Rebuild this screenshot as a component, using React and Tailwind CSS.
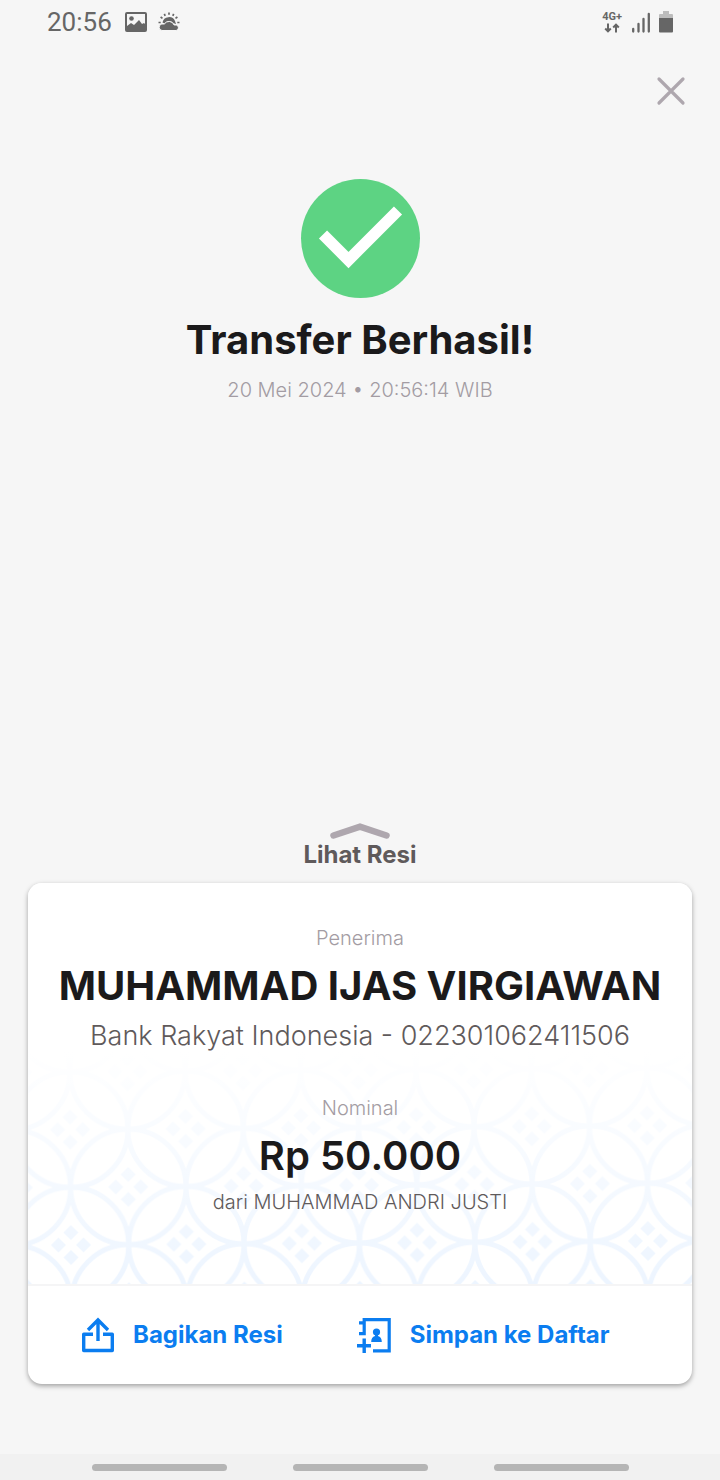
function StatusBar() {
  return (
    <header className="flex h-11 items-center justify-between pr-[47px] pl-[47px] font-[Roboto,sans-serif] text-[#666]">
      <div className="flex items-center">
        <span className="text-[26px] leading-8">20:56</span>
        <svg className="ml-[13px] h-5 w-[22px]" viewBox="0 0 22 20" fill="none">
          <rect x="1" y="1" width="20" height="18" rx="1" stroke="currentColor" strokeWidth="2" />
          <circle cx="6.5" cy="6.5" r="2.3" fill="currentColor" />
          <path d="M2 14l4-3 3 2 5-5 3 4 2-1 2 2v6H2z" fill="currentColor" />
        </svg>
        <svg className="ml-[11px] h-5 w-[22px]" viewBox="0 0 22 20" fill="none">
          <path d="M4.500 10.500a6.600 6.600 0 0 1 12.600-1.300l.9 3-3-1.500a5 5 0 0 0-6.500-.7l-2 1.500z" fill="currentColor" />
          <path
            d="M4 18.500a3.300 3.300 0 0 1-.2-6.500h2.500a5.500 5.500 0 0 1 9.800 1h2.200a2.800 2.800 0 0 1-.2 5.500z"
            fill="currentColor"
            stroke="#f6f6f6"
            strokeWidth="1"
          />
          <path
            d="M11 .5v2.300M6.300 1.800l.9 2M15.700 1.800l-.9 2M2.600 5l1.900 1.400M19.400 5l-1.900 1.400M.5 10.500h2.200M19.300 10.500h2.200"
            stroke="currentColor"
            strokeWidth="1.700"
          />
        </svg>
      </div>
      <div className="flex items-center">
        <div className="flex flex-col items-center">
          <span className="text-[11px] leading-3 font-bold">4G+</span>
          <svg className="h-[10px] w-4" viewBox="0 0 16 10" fill="none" stroke="currentColor" strokeWidth="2">
            <path d="M4 .5v8M1.200 5.500L4 8.300l2.800-2.800M12 9.500v-8M9.200 4.500L12 1.700l2.800 2.800" />
          </svg>
        </div>
        <svg className="ml-[10px] h-[21px] w-[18px]" viewBox="0 0 18 21" stroke="currentColor" strokeWidth="2.300" strokeLinecap="round">
          <path d="M1.200 17v2.500M6.500 12v7.500M11.500 7v12.500M16.800 2v17.500" />
        </svg>
        <svg className="ml-[9px] h-[22px] w-[14px]" viewBox="0 0 14 22">
          <path d="M4 0h6v3h3a1 1 0 0 1 1 1v4H0V4a1 1 0 0 1 1-1h3z" fill="#bdbdbd" />
          <path d="M0 7h14v13.500a1 1 0 0 1-1 1H1a1 1 0 0 1-1-1z" fill="currentColor" />
        </svg>
      </div>
    </header>
  )
}

// kawung batik, strongest at the bottom edge and fading out towards the text
function BatikPattern() {
  return (
    <svg className="absolute inset-0 h-full w-full" aria-hidden="true">
      <defs>
        <g id="flower">
          <circle r="57.7" fill="none" stroke="#edf5ff" strokeWidth="5" />
          <path
            d="M0-20l7.500 7.500L0-5l-7.500-7.500zM0 5l7.500 7.500L0 20l-7.500-7.500zM-12.500-7.500l7.500 7.500-7.500 7.500L-20 0zM12.500-7.500L20 0l-7.500 7.500L5 0z"
            fill="#edf5ff"
          />
        </g>
        <pattern
          id="kawung"
          width="115.4"
          height="115.4"
          patternUnits="userSpaceOnUse"
          patternTransform="translate(43 362) rotate(-0.4)"
        >
          <use href="#flower" />
          <use href="#flower" x="115.4" />
          <use href="#flower" y="115.4" />
          <use href="#flower" x="115.4" y="115.4" />
          <use href="#flower" x="57.7" y="57.7" />
        </pattern>
        <linearGradient id="fade" x1="0" y1="0" x2="0" y2="1">
          <stop offset="0.42" stopColor="#fff" />
          <stop offset="1" stopColor="#fff" stopOpacity="0" />
        </linearGradient>
      </defs>
      <rect width="100%" height="100%" fill="url(#kawung)" />
      <rect width="100%" height="100%" fill="url(#fade)" />
    </svg>
  )
}

function ShareIcon() {
  return (
    <svg className="h-9 w-8" viewBox="0 0 32 36" fill="none" stroke="currentColor" strokeWidth="3.400">
      <path d="M11 17.200H1.700v16.300h28.600V17.200H21" strokeLinejoin="round" />
      <path d="M16 24V3M6 13L16 3l10 10" />
    </svg>
  )
}

function ContactIcon() {
  return (
    <svg className="h-9 w-[34px]" viewBox="0 0 34 36" fill="none" stroke="currentColor" strokeWidth="3.200">
      <path d="M2 5.800h5.200M7.200 9V2.600h25v31.200H16M2 16.700h5.200V9" />
      <path d="M7.200 21.500V36M0 28.700h14" strokeWidth="3.400" />
      <circle cx="19.500" cy="15" r="3.600" fill="currentColor" stroke="none" />
      <path d="M18 16h3v3c2.500.8 3.800 2.600 3.800 6H14.200c0-3.400 1.300-5.200 3.800-6z" fill="currentColor" stroke="none" />
    </svg>
  )
}

export default function App() {
  return (
    <div className="flex min-h-screen flex-col bg-[#f6f6f6] font-[Inter,sans-serif] text-[#1b1a1b]">
      <StatusBar />

      <div className="flex justify-end px-[34px] pt-8">
        <button type="button" aria-label="Tutup" className="text-[#aea7ae]">
          <svg className="h-[30px] w-[30px]" viewBox="0 0 30 30" stroke="currentColor" strokeWidth="3.200" strokeLinecap="round">
            <path d="M3 3l24 24M27 3L3 27" />
          </svg>
        </button>
      </div>

      <main className="flex flex-1 flex-col">
        <div className="flex flex-col items-center pt-[73px] text-center">
          <svg className="h-[119px] w-[119px]" viewBox="0 0 119 119" fill="none">
            <circle cx="59.500" cy="59.500" r="59.500" fill="#5dd383" />
            <path d="M22 55.500L47.500 81 97 31.500" stroke="#fff" strokeWidth="11.500" />
          </svg>
          <h1 className="mt-[18px] text-[40px] leading-12 font-bold">Transfer Berhasil!</h1>
          <p className="mt-3 text-[20px] leading-7 font-light text-[#a39ca3]">20 Mei 2024 • 20:56:14 WIB</p>
        </div>

        <button type="button" className="mx-auto mt-auto flex flex-col items-center text-[#5f5a5b]">
          <svg className="h-4 w-[60px]" viewBox="0 0 60 16" fill="none" stroke="#aea7ae" strokeWidth="6.500" strokeLinecap="round">
            <path d="M3.500 12.500L30 3.700l26.500 8.800" />
          </svg>
          <span className="text-[24px] leading-8 font-bold">Lihat Resi</span>
        </button>

        <section className="mx-7 mt-3 mb-[70px] overflow-hidden rounded-[14px] bg-white shadow-[0_2px_5px_rgba(0,0,0,0.35)]">
          <div className="relative border-b-2 border-[#f5f5f6] pt-[41px] pb-[68px] text-center">
            <BatikPattern />
            <div className="relative">
              <p className="text-[20px] leading-7 font-light text-[#a39ca3]">Penerima</p>
              <h2 className="mt-[10px] text-[40px] leading-12 font-bold">MUHAMMAD IJAS VIRGIAWAN</h2>
              <p className="mt-2 text-[27px] leading-9 font-light text-[#5f5a5b]">Bank Rakyat Indonesia - 022301062411506</p>
              <p className="mt-10 text-[20px] leading-7 font-light text-[#a39ca3]">Nominal</p>
              <p className="mt-[10px] text-[40px] leading-12 font-semibold">Rp 50.000</p>
              <p className="mt-2 text-[20px] leading-7 font-light text-[#5f5a5b]">dari MUHAMMAD ANDRI JUSTI</p>
            </div>
          </div>
          <div className="flex h-[98px] items-center gap-[74px] pl-[54px] text-[24px] leading-8 font-bold text-[#0b7df0]">
            <button type="button" className="flex items-center gap-[19px]">
              <ShareIcon />
              Bagikan Resi
            </button>
            <button type="button" className="flex items-center gap-[19px]">
              <ContactIcon />
              Simpan ke Daftar
            </button>
          </div>
        </section>
      </main>

      <nav className="flex h-[26px] items-center justify-center gap-[66px] bg-[#f1f1f1]">
        <button type="button" aria-label="Aplikasi terbaru" className="h-[7px] w-[135px] rounded-full bg-[#b5b5b5]" />
        <button type="button" aria-label="Beranda" className="h-[7px] w-[135px] rounded-full bg-[#b5b5b5]" />
        <button type="button" aria-label="Kembali" className="h-[7px] w-[135px] rounded-full bg-[#b5b5b5]" />
      </nav>
    </div>
  )
}
